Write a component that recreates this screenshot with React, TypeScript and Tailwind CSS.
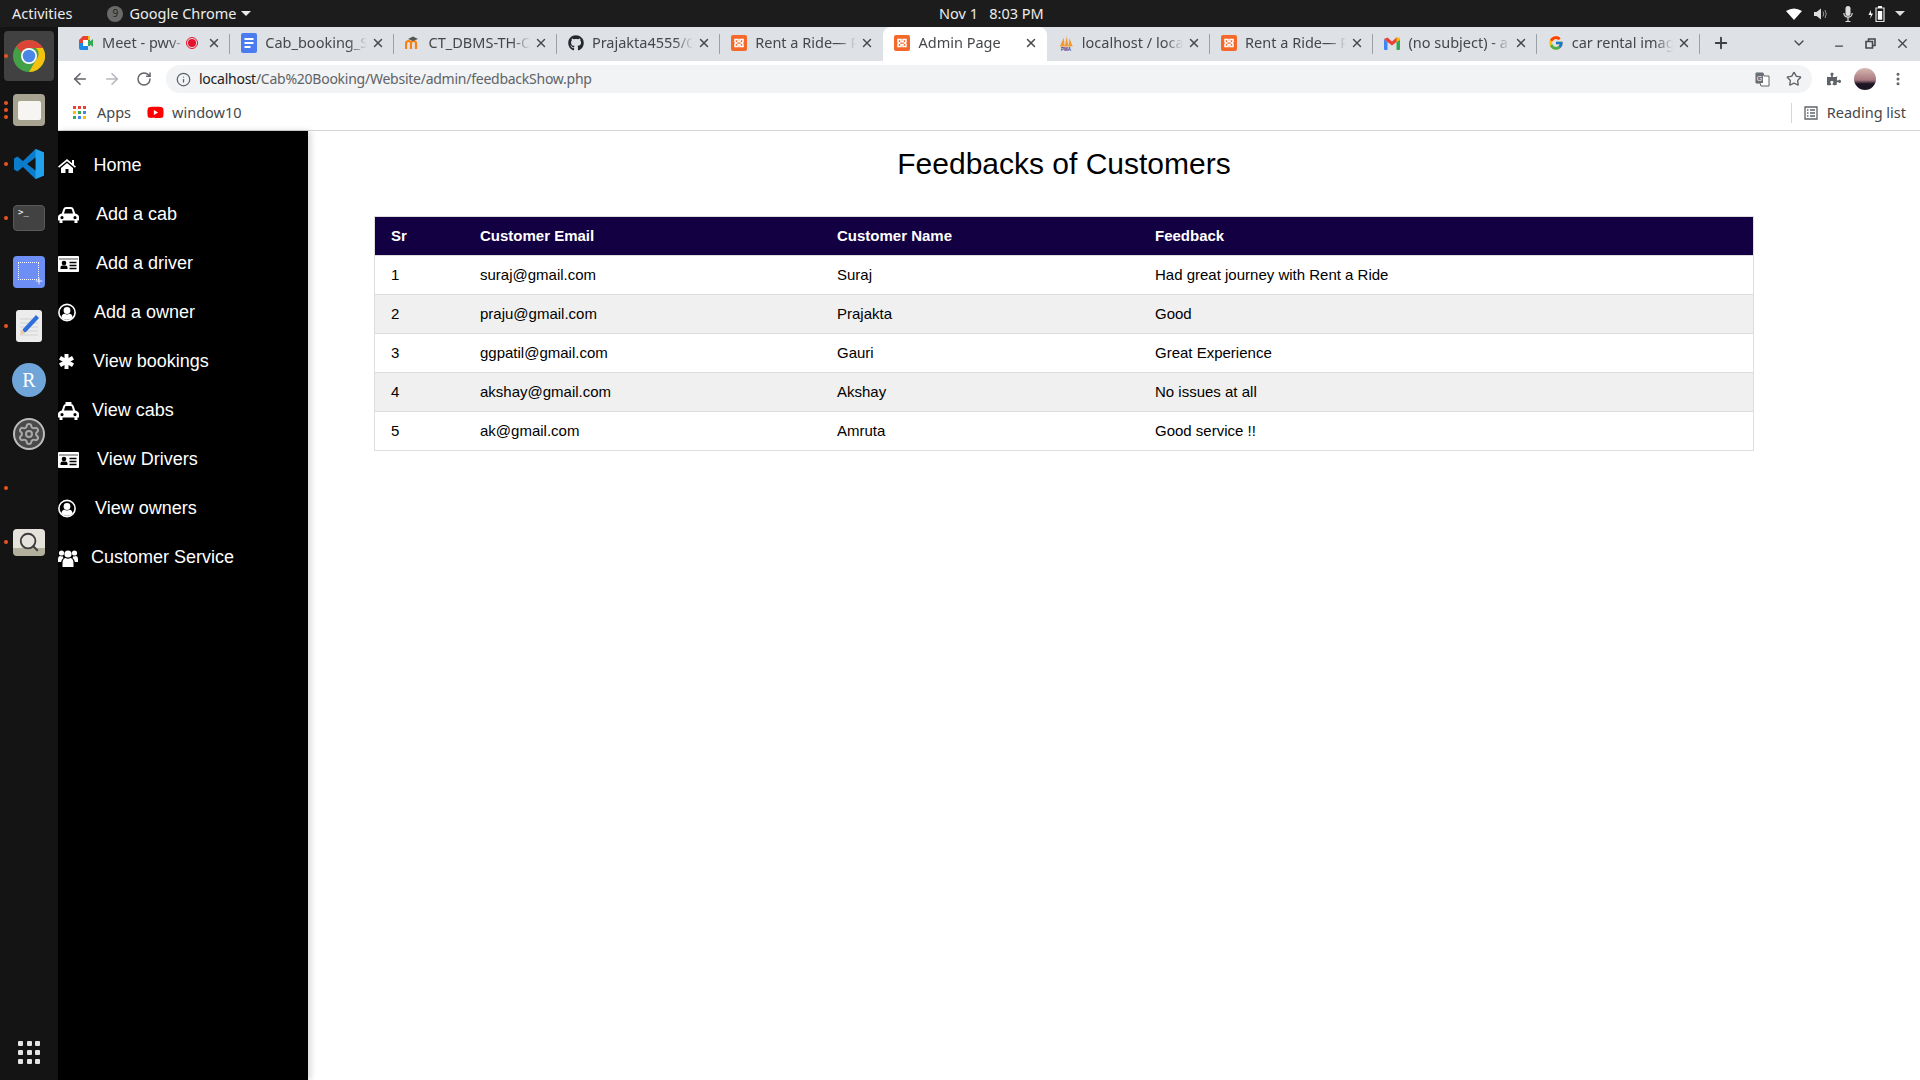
import React from 'react'
import { FaGithub, FaPuzzlePiece, FaYoutube } from 'react-icons/fa'
import { FcGoogle } from 'react-icons/fc'
import { ArrowLeft, ArrowRight, RotateCw, Info, Star, X, Plus, ChevronDown, Minus, EllipsisVertical, Settings, Search } from 'lucide-react'

const ChromeIcon = ({ size = 32 }: { size?: number }) => (
  <svg width={size} height={size} viewBox="0 0 48 48">
    <circle cx="24" cy="24" r="24" fill="#43a047" />
    <path d="M24 0a24 24 0 0 1 20.800 12H24a12 12 0 0 0-11 7.200L4.800 9.600A24 24 0 0 1 24 0z" fill="#db4437" />
    <path d="M44.800 12A24 24 0 0 1 24 48l10.400-18a12 12 0 0 0 0-18z" fill="#f4c20d" />
    <circle cx="24" cy="24" r="12" fill="#fff" />
    <circle cx="24" cy="24" r="9.500" fill="#4a86e8" />
  </svg>
)

const XamppIcon = () => (
  <svg width="16" height="16" viewBox="0 0 16 16">
    <rect width="16" height="16" rx="2" fill="#f4692a" />
    <path d="M4 4.500h3v2.200h2V4.500h3v2.600l-1.500 1 1.500 1v2.400H9V9.400H7v2.100H4V9.100l1.500-1L4 7.100z" fill="none" stroke="#fff" strokeWidth="1.500" />
  </svg>
)

const MeetIcon = () => (
  <svg width="16" height="16" viewBox="0 0 16 16">
    <path d="M1 5l4-4h5v4H5v3H1z" fill="#ea4335" />
    <path d="M1 8h4v3h5v4H3a2 2 0 0 1-2-2z" fill="#1e88e5" />
    <path d="M10 1h1a1 1 0 0 1 1 1v3.500L10 8z" fill="#fbbc04" />
    <path d="M5 5h5v6H5z" fill="#fff" />
    <path d="M10 8l5-4v8l-5-4z" fill="#34a853" />
    <path d="M10 5l2 0v6h-2z" fill="#34a853" />
  </svg>
)

const DocsIcon = () => (
  <svg width="16" height="20" viewBox="0 0 16 20">
    <rect width="16" height="20" rx="2" fill="#4a7cf0" />
    <path d="M3.500 6h9M3.500 10h9M3.500 14h6" stroke="#fff" strokeWidth="1.800" />
  </svg>
)

const MoodleIcon = () => (
  <svg width="16" height="16" viewBox="0 0 16 16">
    <path d="M1 14V8.500a2.500 2.500 0 0 1 5 0V14M6 8.500a2.500 2.500 0 0 1 5 0V14M11 8.500V14" fill="none" stroke="#f98012" strokeWidth="2.200" />
    <path d="M3 4l5-2.500L13 4 8 6z" fill="#555" />
  </svg>
)

const PmaIcon = () => (
  <svg width="18" height="18" viewBox="0 0 18 18">
    <path d="M2 13L6.500 3l1 10zM7.500 13L10 1l1.500 12zM11.500 13L13 4l3.500 9z" fill="#f29a2e" />
    <text x="9" y="17.500" textAnchor="middle" fontSize="5" fontWeight="700" fill="#3c3a8c" fontFamily="Liberation Sans">PMA</text>
  </svg>
)

const GmailIcon = () => (
  <svg width="16" height="13" viewBox="0 0 16 13">
    <path d="M0 2v10a1 1 0 0 0 1 1h2.500V5z" fill="#4285f4" />
    <path d="M16 2v10a1 1 0 0 1-1 1h-2.500V5z" fill="#34a853" />
    <path d="M0 2l3.500-1.500L8 4.500l4.500-4L16 2l-3.500 3L8 8.500 3.500 5z" fill="#ea4335" />
    <path d="M12.500 .5L16 .8V3l-3.500 2z" fill="#fbbc04" />
  </svg>
)

// font awesome 4 look, the icon packages only carry the newer shapes
const HomeGlyph = () => (
  <svg width="18" height="14" viewBox="0 0 18 14" fill="#fff">
    <path d="M9 0l5 4.200V1h2v4.900l2 1.700-1.100 1.200L9 2.300 1.100 8.800 0 7.600z" />
    <path d="M3 8.900l6-5 6 5V14h-4.500v-4h-3v4H3z" />
  </svg>
)

const CarGlyph = () => (
  <svg width="21" height="16" viewBox="0 0 21 16" fill="#fff" fillRule="evenodd">
    <path d="M3.800 6.500L5.300 2Q6 0 8 0h5q2 0 2.700 2l1.500 4.500Q21 7.500 21 10v3.500h-1.500V16h-3v-2.500h-12V16h-3v-2.500H0V10q0-2.500 3.800-3.500zM6 6.500h9l-1.100-3.700Q13.600 2 13 2H8q-.6 0-.9.8zM4 9a1.600 1.600 0 1 0 0 3.200A1.600 1.600 0 0 0 4 9zm13 0a1.600 1.600 0 1 0 0 3.200A1.600 1.600 0 0 0 17 9z" />
  </svg>
)

const TaxiGlyph = () => (
  <svg width="21" height="18" viewBox="0 0 21 18" fill="#fff" fillRule="evenodd">
    <path d="M7.500 0h6v2h-6z" />
    <path d="M3.800 8.500L5.300 4Q6 2 8 2h5q2 0 2.700 2l1.500 4.500Q21 9.500 21 12v3.500h-1.500V18h-3v-2.500h-12V18h-3v-2.500H0V12q0-2.500 3.800-3.500zM6 8.500h9l-1.100-3.700Q13.600 4 13 4H8q-.6 0-.9.8zM4 11a1.600 1.600 0 1 0 0 3.200A1.600 1.600 0 0 0 4 11zm13 0a1.600 1.600 0 1 0 0 3.200A1.600 1.600 0 0 0 17 11z" />
  </svg>
)

const CardGlyph = () => (
  <svg width="21" height="16" viewBox="0 0 21 16">
    <rect width="21" height="16" rx="1" fill="#fff" />
    <path d="M1 3h19" stroke="#000" strokeWidth=".7" />
    <circle cx="6" cy="7" r="2.300" fill="#000" />
    <path d="M2.500 13v-1.500Q2.500 9.500 4.500 9.500h3q2 0 2 2V13z" fill="#000" />
    <path d="M11.500 6.500h7M11.500 9.500h7M11.500 12.500h7" stroke="#000" strokeWidth="1.300" />
  </svg>
)

const UserGlyph = () => (
  <svg width="18" height="19" viewBox="0 0 18 18">
    <circle cx="9" cy="9" r="8.100" fill="none" stroke="#fff" strokeWidth="1.600" />
    <circle cx="9" cy="7" r="3.400" fill="#fff" />
    <path d="M3.300 14q.6-3.600 3.200-3.800 2.500 1.400 5 0 2.600.2 3.200 3.800Q12.500 16.200 9 16.200T3.300 14z" fill="#fff" />
  </svg>
)

const AsteriskGlyph = () => (
  <svg width="15" height="15" viewBox="0 0 15 15" className="ml-[1px]">
    <path d="M7.500 0v15M1 3.750l13 7.500M14 3.750l-13 7.500" stroke="#fff" strokeWidth="4" />
  </svg>
)

const UsersGlyph = () => (
  <svg width="20" height="18" viewBox="0 0 20 18" fill="#fff">
    <circle cx="10" cy="5" r="3.600" />
    <path d="M4.500 18v-3.500q0-5 3-5.500 2 1.300 5 0 3 .5 3 5.500V18z" />
    <circle cx="3.500" cy="4" r="2.600" />
    <circle cx="16.500" cy="4" r="2.600" />
    <path d="M0 13v-3q0-2.800 2-3 1.500.8 3 .3-.2 1 .5 1.700Q3.300 10.300 3.200 13zM20 13v-3q0-2.800-2-3-1.500.8-3 .3.200 1-.5 1.700 2.200 1.300 2.300 4z" />
  </svg>
)

const tabs = [
  { title: 'Meet - pwv-', icon: <MeetIcon />, rec: true },
  { title: 'Cab_booking_S', icon: <DocsIcon /> },
  { title: 'CT_DBMS-TH-C', icon: <MoodleIcon /> },
  { title: 'Prajakta4555/C', icon: <FaGithub size={16} color="#24292e" /> },
  { title: 'Rent a Ride— R', icon: <XamppIcon /> },
  { title: 'Admin Page', icon: <XamppIcon />, active: true },
  { title: 'localhost / loca', icon: <PmaIcon /> },
  { title: 'Rent a Ride— R', icon: <XamppIcon /> },
  { title: '(no subject) - a', icon: <GmailIcon /> },
  { title: 'car rental imag', icon: <FcGoogle size={16} /> },
]

const sideLinks = [
  { label: 'Home', icon: <HomeGlyph />, iconBox: 'w-[35.500px]' },
  { label: 'Add a cab', icon: <CarGlyph />, iconBox: 'w-[38px]' },
  { label: 'Add a driver', icon: <CardGlyph />, iconBox: 'w-[38px]' },
  { label: 'Add a owner', icon: <UserGlyph />, iconBox: 'w-[36px]' },
  { label: 'View bookings', icon: <AsteriskGlyph />, iconBox: 'w-[35px]' },
  { label: 'View cabs', icon: <TaxiGlyph />, iconBox: 'w-[34px]' },
  { label: 'View Drivers', icon: <CardGlyph />, iconBox: 'w-[39px]' },
  { label: 'View owners', icon: <UserGlyph />, iconBox: 'w-[37px]' },
  { label: 'Customer Service', icon: <UsersGlyph />, iconBox: 'w-[33px]' },
]

const feedbacks = [
  { sr: 1, email: 'suraj@gmail.com', name: 'Suraj', text: 'Had great journey with Rent a Ride' },
  { sr: 2, email: 'praju@gmail.com', name: 'Prajakta', text: 'Good' },
  { sr: 3, email: 'ggpatil@gmail.com', name: 'Gauri', text: 'Great Experience' },
  { sr: 4, email: 'akshay@gmail.com', name: 'Akshay', text: 'No issues at all' },
  { sr: 5, email: 'ak@gmail.com', name: 'Amruta', text: 'Good service !!' },
]

const DockSlot = ({ dots = 0, children }: { dots?: number; children?: React.ReactNode }) => (
  <div className="relative flex h-[54px] w-[58px] items-center justify-center">
    {dots > 0 && (
      <div className="absolute left-[4px] top-1/2 flex -translate-y-1/2 flex-col gap-[3px]">
        {Array.from({ length: dots }).map((_, i) => (
          <div key={i} className="h-[4px] w-[4px] rounded-full bg-[#e95420]" />
        ))}
      </div>
    )}
    {children}
  </div>
)

const Dock = () => (
  <div className="flex h-full w-[58px] shrink-0 flex-col bg-[#141414] pt-[2px]">
    <DockSlot dots={1}>
      <div className="flex h-[50px] w-[50px] items-center justify-center rounded-[4px] bg-[#414141]">
        <ChromeIcon size={32} />
      </div>
    </DockSlot>
    <DockSlot dots={3}>
      <div className="flex h-[32px] w-[32px] items-end justify-center rounded-[4px] bg-[#a8a290] pb-[6px]">
        <div className="h-[19px] w-[23px] rounded-[2px] bg-[#f6f5f2]" />
      </div>
    </DockSlot>
    <DockSlot dots={1}>
      <svg width="30" height="30" viewBox="0 0 30 30">
        <path d="M21.500 0L30 3.500v23L21.500 30 9 18l-5.500 4.500L0 20.500v-11L3.500 7.500 9 12z" fill="#0a7ccb" />
        <path d="M21.500 0L30 3.500v23L21.500 30z" fill="#22a2ec" />
        <path d="M21.500 8.500L13 15l8.500 6.500z" fill="#141414" />
      </svg>
    </DockSlot>
    <DockSlot dots={1}>
      <div className="h-[26px] w-[32px] rounded-[4px] border border-[#5a5a5a] bg-[#424242] pl-[4px] text-[9px] leading-[12px] text-white [font-family:'DejaVu_Sans_Mono',monospace]">
        &gt;_
      </div>
    </DockSlot>
    <DockSlot>
      <div className="relative h-[32px] w-[32px] rounded-[4px] bg-[#6d8ff5]">
        <div className="absolute left-[5px] top-[6px] h-[18px] w-[21px] border border-dotted border-white" />
        <Plus size={10} color="#fff" strokeWidth={2} className="absolute bottom-[2px] right-[1px]" />
      </div>
    </DockSlot>
    <DockSlot dots={1}>
      <div className="relative h-[32px] w-[26px] rounded-[3px] bg-[#ececec]">
        <svg width="26" height="32" viewBox="0 0 26 32" className="absolute left-0 top-0">
          <path d="M4 9h18M4 13h18M4 17h18M4 21h18M4 25h18" stroke="#d2d2d2" strokeWidth="1" />
          <path d="M20 5l3 3-13 14-4 1 1-4z" fill="#2f6fdb" />
          <path d="M6 19l-2 6 5-2z" fill="#e8c9a0" />
        </svg>
      </div>
    </DockSlot>
    <DockSlot>
      <div className="flex h-[34px] w-[34px] items-center justify-center rounded-full bg-[#6fa5d8] text-[20px] text-white [font-family:'Liberation_Serif',serif]">
        R
      </div>
    </DockSlot>
    <DockSlot>
      <div className="flex h-[32px] w-[32px] items-center justify-center rounded-full border-[2px] border-[#bdbdbd] bg-[#4a4a4a]">
        <Settings size={24} color="#a8a8a8" strokeWidth={2} />
      </div>
    </DockSlot>
    <DockSlot dots={1} />
    <DockSlot dots={1}>
      <div className="flex h-[27px] w-[32px] items-center justify-center rounded-[4px] bg-[linear-gradient(to_bottom,#e4e2da_70%,#b4b09e_70%)]">
        <Search size={22} color="#3c3c3c" strokeWidth={2} />
      </div>
    </DockSlot>
    <div className="mt-auto mb-[16px] grid w-[22px] grid-cols-3 gap-[4px] self-center">
      {Array.from({ length: 9 }).map((_, i) => (
        <div key={i} className="h-[5px] w-[5px] rounded-[1px] bg-[#e4e4e4]" />
      ))}
    </div>
  </div>
)

const TopBar = () => (
  <div className="relative flex h-[27px] shrink-0 items-center bg-[#1c1c1c] text-[14.500px] text-[#ececec]">
    <span className="ml-[12px]">Activities</span>
    <div className="ml-[35px] flex h-[16px] w-[16px] items-center justify-center rounded-full bg-[#6a6a6a] text-[10px] text-[#222]">9</div>
    <span className="ml-[6px]">Google Chrome</span>
    <div className="ml-[5px] h-0 w-0 border-x-[5px] border-t-[5px] border-x-transparent border-t-[#ececec]" />
    <span className="absolute left-[939px]">Nov 1&nbsp;&nbsp; 8:03 PM</span>
    <div className="ml-auto mr-[15px] flex items-center">
      <svg width="16" height="12" viewBox="0 0 16 12">
        <path d="M0 3Q8-2 16 3L8 12z" fill="#fff" />
      </svg>
      <svg width="14" height="14" viewBox="0 0 14 14" className="ml-[12px]">
        <path d="M0 5h2.500L7 1.500v11L2.500 9H0z" fill="#ddd" />
        <path d="M9 4.500q1.500 2.500 0 5M11 3q2.500 4 0 8" fill="none" stroke="#999" strokeWidth="1" />
      </svg>
      <svg width="10" height="16" viewBox="0 0 10 16" className="ml-[15px]">
        <rect x="2.500" y="0" width="5" height="10" rx="2.500" fill="#ddd" />
        <path d="M.8 7a4.200 4.200 0 0 0 8.400 0M5 11.500V15M2.500 15.500h5" fill="none" stroke="#ddd" strokeWidth="1.200" />
      </svg>
      <svg width="17" height="16" viewBox="0 0 17 16" className="ml-[15px]">
        <path d="M8 2h8v13.500H8z" fill="none" stroke="#ddd" strokeWidth="1.200" />
        <path d="M10 0h4v2h-4zM9.800 5h4.400v8.700H9.800z" fill="#fff" />
        <path d="M3 4L.5 9H3l-1 4 3-5.500H3z" fill="#fff" />
      </svg>
      <div className="ml-[10px] h-0 w-0 border-x-[5px] border-t-[5px] border-x-transparent border-t-[#ddd]" />
    </div>
  </div>
)

const TabStrip = () => (
  <div className="flex h-[34px] shrink-0 items-stretch bg-[#dee1e6] pl-[9px]">
    {tabs.map((t, i) => {
      const hideSep = t.active || tabs[i + 1]?.active
      return (
        <div
          key={i}
          className={`relative flex w-[163.300px] shrink-0 items-center pb-[2px] pl-[11px] pr-[9px] text-[14.500px] text-[#45474a] ${
            t.active ? 'rounded-t-[8px] bg-white text-[#3c4043]' : ''
          }`}
        >
          <div className="flex w-[16px] shrink-0 items-center justify-center">{t.icon}</div>
          <span className="ml-[8px] flex-1 overflow-hidden whitespace-nowrap [mask-image:linear-gradient(to_right,black_82%,transparent)]">
            {t.title}
          </span>
          {t.rec && (
            <div className="ml-[1px] flex h-[12px] w-[12px] items-center justify-center rounded-full border border-[#e8112d]">
              <div className="h-[8px] w-[8px] rounded-full bg-[#e8112d]" />
            </div>
          )}
          <X size={14} strokeWidth={2.5} color="#46484b" className={t.rec ? 'ml-[9px]' : 'ml-[4px]'} />
          {!hideSep && <div className="absolute right-0 top-[7px] h-[20px] w-px bg-[#9da0a5]" />}
        </div>
      )
    })}
    <div className="ml-[12px] flex items-center pb-[2px]">
      <Plus size={18} strokeWidth={2.5} color="#3c4043" />
    </div>
    <div className="ml-auto flex items-center pb-[2px] pr-[10px]">
      <ChevronDown size={16} color="#45474a" strokeWidth={2} />
      <Minus size={12} strokeWidth={2.5} color="#45474a" className="ml-[26px] mt-[6px]" />
      <svg width="11" height="11" viewBox="0 0 11 11" className="ml-[20px]">
        <path d="M1 3.500h6.500V10H1zM3.500 3.500V1H10v6.500H7.500" fill="none" stroke="#45474a" strokeWidth="1.600" />
      </svg>
      <X size={15} strokeWidth={2.2} color="#45474a" className="ml-[19px]" />
    </div>
  </div>
)

const Toolbar = () => (
  <div className="flex h-[36px] shrink-0 items-center bg-white">
    <ArrowLeft size={18} color="#5f6368" strokeWidth={2.2} className="ml-[13px]" />
    <ArrowRight size={18} color="#b5b8bc" strokeWidth={2.2} className="ml-[14px]" />
    <RotateCw size={16} color="#5f6368" strokeWidth={2.2} className="ml-[15px]" />
    <div className="ml-[14px] flex h-[28px] w-[1646px] items-center rounded-full bg-[#f1f3f4]">
      <Info size={15} color="#5f6368" strokeWidth={2} className="ml-[10px]" />
      <span className="ml-[8px] pb-[2px] text-[14px] tracking-[-0.25px] text-[#5f6368]">
        <span className="text-[#202124]">localhost</span>/Cab%20Booking/Website/admin/feedbackShow.php
      </span>
      <div className="ml-auto mr-[10px] flex items-center gap-[16px]">
        <svg width="15" height="15" viewBox="0 0 15 15">
          <path d="M1 1h7l1 3H14v10H6L5 11H1z" fill="#fff" stroke="#5f6368" strokeWidth="1" />
          <path d="M1 1h7v10H1z" fill="#6b6f73" />
          <text x="4.500" y="8.500" textAnchor="middle" fontSize="7" fill="#fff" fontFamily="Liberation Sans">G</text>
        </svg>
        <Star size={16} color="#5f6368" strokeWidth={2} />
      </div>
    </div>
    <FaPuzzlePiece size={14} color="#5f6368" className="ml-[15px]" />
    <div className="ml-[13px] h-[22px] w-[22px] rounded-full bg-[linear-gradient(to_bottom,#d8b8b0,#a87880_55%,#1d1424_72%)]" />
    <EllipsisVertical size={16} color="#5f6368" strokeWidth={2.5} className="ml-[14px]" />
  </div>
)

const BookmarksBar = () => (
  <div className="flex h-[34px] shrink-0 items-center border-b border-[#d6d6d6] bg-white pb-[2px] text-[14.500px] text-[#45474a]">
    <div className="ml-[15px] grid grid-cols-3 gap-[2px]">
      {['#ea4335', '#ea4335', '#ea4335', '#fbbc04', '#34a853', '#4285f4', '#34a853', '#4285f4', '#fbbc04'].map((c, i) => (
        <div key={i} className="h-[3px] w-[3px]" style={{ backgroundColor: c }} />
      ))}
    </div>
    <span className="ml-[11px]">Apps</span>
    <FaYoutube size={17} color="#f00" className="ml-[16px]" />
    <span className="ml-[8px]">window10</span>
    <div className="ml-auto mr-[14px] flex items-center">
      <div className="mr-[12px] h-[20px] w-px bg-[#d6d6d6]" />
      <svg width="14" height="14" viewBox="0 0 14 14">
        <path d="M1 1h12v12H1zM3 4h1.500M6 4h5M3 7h1.500M6 7h5M3 10h1.500M6 10h5" fill="none" stroke="#5f6368" strokeWidth="1.300" />
      </svg>
      <span className="ml-[9px]">Reading list</span>
    </div>
  </div>
)

const Sidebar = () => (
  <div className="flex h-full w-[250px] shrink-0 flex-col bg-black pt-[10px] text-[18px] text-white shadow-[3px_0_6px_rgba(0,0,0,0.15)] [font-family:'Liberation_Sans',sans-serif]">
    {sideLinks.map((l) => (
      <div key={l.label} className="flex h-[49px] items-center">
        <div className={`flex shrink-0 items-center ${l.iconBox}`}>{l.icon}</div>
        <span>{l.label}</span>
      </div>
    ))}
  </div>
)

const FeedbackTable = () => (
  <table className="w-[1380px] table-fixed border-collapse text-left text-[15px] text-black">
    <colgroup>
      <col className="w-[89.500px]" />
      <col className="w-[357px]" />
      <col className="w-[318px]" />
      <col />
    </colgroup>
    <thead>
      <tr className="h-[39px] bg-[#120042] text-white">
        <th className="border border-[#dddddd] border-r-0 px-[16px] font-bold">Sr</th>
        <th className="border-y border-[#dddddd] px-[16px] font-bold">Customer Email</th>
        <th className="border-y border-[#dddddd] px-[16px] font-bold">Customer Name</th>
        <th className="border border-[#dddddd] border-l-0 px-[16px] font-bold">Feedback</th>
      </tr>
    </thead>
    <tbody>
      {feedbacks.map((f) => (
        <tr key={f.sr} className="h-[39px] border border-[#dddddd] even:bg-[#f0f0f0]">
          <td className="px-[16px]">{f.sr}</td>
          <td className="px-[16px]">{f.email}</td>
          <td className="px-[16px]">{f.name}</td>
          <td className="px-[16px]">{f.text}</td>
        </tr>
      ))}
    </tbody>
  </table>
)

export default function App() {
  return (
    <div className="flex h-screen w-screen flex-col overflow-hidden bg-white [font-family:'Noto_Sans',sans-serif]">
      <TopBar />
      <div className="flex min-h-0 flex-1">
        <Dock />
        <div className="flex min-w-0 flex-1 flex-col">
          <TabStrip />
          <Toolbar />
          <BookmarksBar />
          <div className="flex min-h-0 flex-1">
            <Sidebar />
            <main className="flex-1 pl-[66px] pt-[15px] [font-family:'Liberation_Sans',sans-serif]">
              <h1 className="mb-[35px] w-[1380px] text-center text-[30px] font-normal leading-[35px] text-black">
                Feedbacks of Customers
              </h1>
              <FeedbackTable />
            </main>
          </div>
        </div>
      </div>
    </div>
  )
}
